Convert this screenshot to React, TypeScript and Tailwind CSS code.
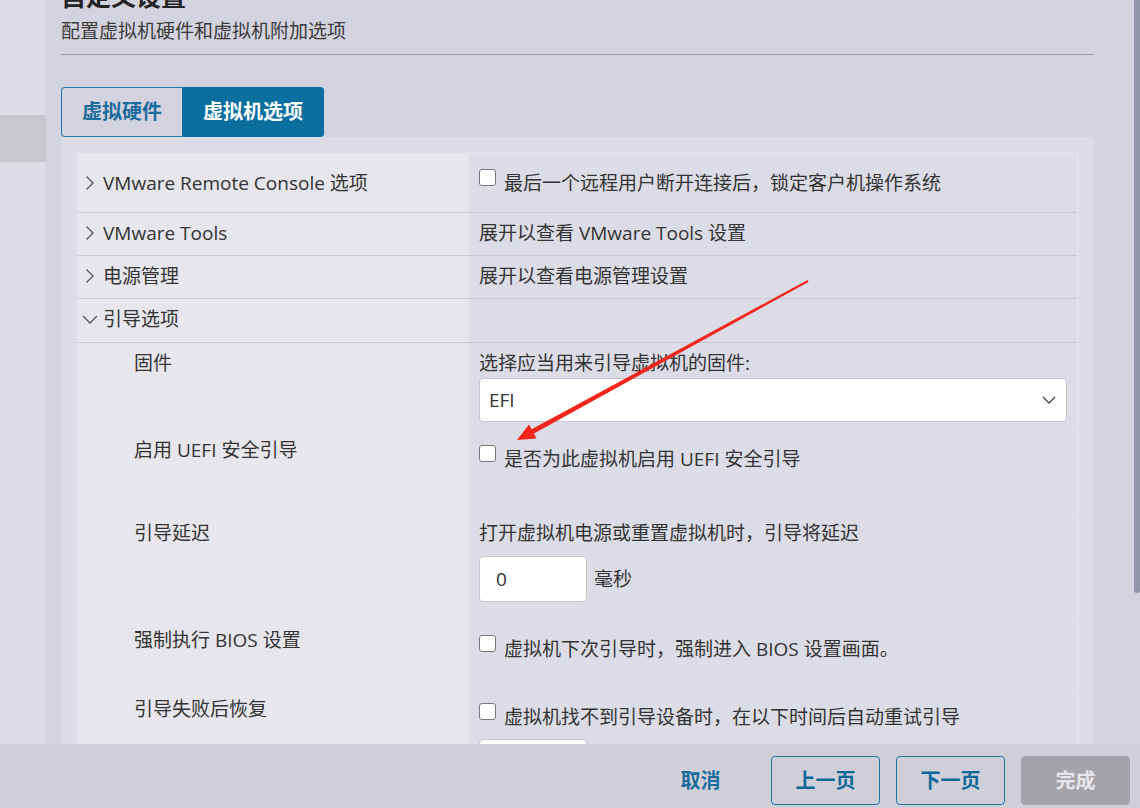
import type { ReactNode } from "react";

const font = { fontFamily: '"Open Sans", "Noto Sans CJK SC", sans-serif' };

function ChevronRight() {
	return (
		<svg width="16" height="16" viewBox="0 0 16 16" className="shrink-0">
			<path d="M4.5 1.5 L11 8 L4.5 14.5" fill="none" stroke="#555" strokeWidth="1.3" />
		</svg>
	);
}

function ChevronDown() {
	return (
		<svg width="16" height="16" viewBox="0 0 16 16" className="shrink-0">
			<path d="M1 5 L8 12 L15 5" fill="none" stroke="#555" strokeWidth="1.3" />
		</svg>
	);
}

function Check({ text }: { text: string }) {
	return (
		<div className="flex items-start gap-[8px]">
			<span className="h-[17px] w-[17px] shrink-0 rounded-[3px] border-[1.5px] border-[#77777f] bg-white" />
			<span className="mt-[2px] leading-[24px]">{text}</span>
		</div>
	);
}

function Row({
	h,
	left,
	right,
	chevron,
	sub,
	leftPt = "pt-[8px]",
	rightPt = "pt-[8px]",
}: {
	h: string;
	left: string;
	right?: ReactNode;
	chevron?: "right" | "down";
	sub?: boolean;
	leftPt?: string;
	rightPt?: string;
}) {
	return (
		<div
			className={`flex ${h} border-b ${sub ? "border-[#e1e1e8]" : "border-[#c9c9d3]"}`}
		>
			<div
				className={`flex w-[392px] shrink-0 items-start bg-[#e6e6ec] ${leftPt} ${sub ? "pl-[57px]" : "pl-[5px]"}`}
			>
				{chevron && (
					<span className="mr-[5px] mt-[4px] flex">
						{chevron === "right" ? <ChevronRight /> : <ChevronDown />}
					</span>
				)}
				<span className="leading-[24px]">{left}</span>
			</div>
			<div className={`flex-1 bg-[#dcdce6] pl-[10px] pr-[10px] ${rightPt}`}>{right}</div>
		</div>
	);
}

function Btn({ label, kind }: { label: string; kind: "link" | "outline" | "disabled" }) {
	const cls =
		kind === "link"
			? "border-transparent text-[#1b6c9b]"
			: kind === "outline"
				? "border-[#2173a1] text-[#0d6897]"
				: "border-[#a3a3a9] bg-[#a3a3a9] text-[#e6e6ea]";
	return (
		<div
			className={`flex h-[49px] w-[109px] items-center justify-center rounded-[4px] border text-[20px] font-bold ${cls}`}
		>
			{label}
		</div>
	);
}

export default function App() {
	return (
		<div
			className="relative flex h-[808px] w-[1140px] flex-col overflow-hidden bg-[#d3d3df] text-[19px] text-[#333]"
			style={font}
		>
			<div className="flex min-h-0 flex-1">
				{/* left nav strip */}
				<div className="w-[46px] shrink-0 bg-[#dcdce4] pt-[115px]">
					<div className="h-[47px] bg-[#c7c7cd]" />
				</div>

				{/* wizard body */}
				<div className="flex min-w-0 flex-1 flex-col pl-[15px] pr-[46px]">
					<div className="mt-[-20px] text-[25px] font-bold leading-[32px] text-[#222]">自定义设置</div>
					<div className="mt-[6px] leading-[26px] text-[#3a3a3a]">配置虚拟机硬件和虚拟机附加选项</div>
					<div className="mt-[10px] h-px bg-[#9a9aa8]" />

					<div className="mt-[32px] flex h-[50px]">
						<div className="flex w-[121px] items-center justify-center rounded-l-[4px] border border-r-0 border-[#2a78a4] text-[20px] font-bold text-[#1b6c9b]">
							虚拟硬件
						</div>
						<div className="flex w-[142px] items-center justify-center rounded-r-[4px] bg-[#0a6e9e] text-[20px] font-bold text-white">
							虚拟机选项
						</div>
					</div>

					<div className="min-h-0 flex-1 overflow-hidden bg-[#dcdce6] px-[16px] pt-[16px]">
						<div className="border-r border-t border-[#e6e6ec]">
							<Row
								h="h-[59px]"
								chevron="right"
								left="VMware Remote Console 选项"
								leftPt="pt-[17px]"
								rightPt="pt-[15px]"
								right={<Check text="最后一个远程用户断开连接后，锁定客户机操作系统" />}
							/>
							<Row
								h="h-[43px]"
								chevron="right"
								left="VMware Tools"
								right={<div className="leading-[24px]">展开以查看 VMware Tools 设置</div>}
							/>
							<Row
								h="h-[43px]"
								chevron="right"
								left="电源管理"
								right={<div className="leading-[24px]">展开以查看电源管理设置</div>}
							/>
							<Row h="h-[44px]" chevron="down" left="引导选项" />
							<Row
								h="h-[87px]"
								sub
								left="固件"
								right={
									<div>
										<div className="leading-[24px]">选择应当用来引导虚拟机的固件:</div>
										<div className="mt-[3px] flex h-[44px] items-center justify-between rounded-[4px] border border-[#c6c6ce] bg-white pl-[9px] pr-[10px]">
											<span>EFI</span>
											<svg width="14" height="10" viewBox="0 0 14 10">
												<path d="M1 2 L7 8 L13 2" fill="none" stroke="#444" strokeWidth="1.3" />
											</svg>
										</div>
									</div>
								}
							/>
							<Row
								h="h-[83px]"
								sub
								left="启用 UEFI 安全引导"
								rightPt="pt-[15px]"
								right={<Check text="是否为此虚拟机启用 UEFI 安全引导" />}
							/>
							<Row
								h="h-[107px]"
								sub
								left="引导延迟"
								right={
									<div>
										<div className="leading-[24px]">打开虚拟机电源或重置虚拟机时，引导将延迟</div>
										<div className="mt-[11px] flex items-center gap-[7px]">
											<div className="flex h-[46px] w-[108px] items-center rounded-[4px] border border-[#c6c6ce] bg-white pl-[16px]">
												0
											</div>
											<span>毫秒</span>
										</div>
									</div>
								}
							/>
							<Row
								h="h-[69px]"
								sub
								left="强制执行 BIOS 设置"
								rightPt="pt-[15px]"
								right={<Check text="虚拟机下次引导时，强制进入 BIOS 设置画面。" />}
							/>
							<Row
								h="h-[120px]"
								sub
								left="引导失败后恢复"
								rightPt="pt-[14px]"
								right={
									<div>
										<Check text="虚拟机找不到引导设备时，在以下时间后自动重试引导" />
										<div className="mt-[10px] h-[46px] w-[108px] rounded-[4px] border border-[#c6c6ce] bg-white" />
									</div>
								}
							/>
						</div>
					</div>
				</div>
			</div>

			{/* footer */}
			<div className="flex h-[64px] shrink-0 items-start justify-end gap-[16px] bg-[#cfcfd9] pr-[10px] pt-[12px]">
				<Btn label="取消" kind="link" />
				<Btn label="上一页" kind="outline" />
				<Btn label="下一页" kind="outline" />
				<Btn label="完成" kind="disabled" />
			</div>

			{/* scrollbar */}
			<div className="absolute right-0 top-0 h-[593px] w-[6px] rounded-b-[4px] bg-[#9494aa]" />

			{/* annotation arrow */}
			<svg className="pointer-events-none absolute inset-0" width="1140" height="808" viewBox="0 0 1140 808">
				<polygon
					points="807.5,280.1 808.5,281.9 534,433.6 536.6,438.4 517,440 529,424.4 531.6,429.2"
					fill="#f2261c"
				/>
			</svg>
		</div>
	);
}
